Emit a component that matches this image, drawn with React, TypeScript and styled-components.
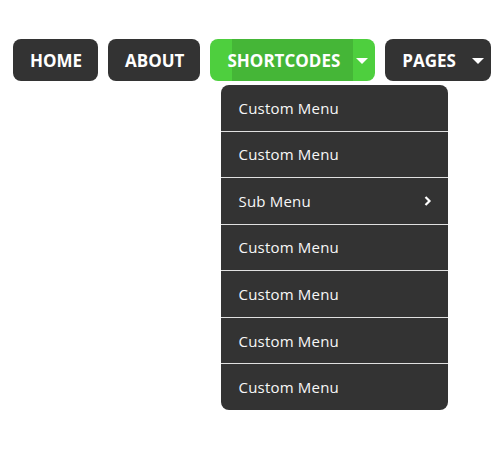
import React from "react";
import styled, { createGlobalStyle } from "styled-components";

const Global = createGlobalStyle`
  html, body { margin: 0; padding: 0; background: #fff; }
  body { font-family: "Open Sans", "Liberation Sans", sans-serif; }
`;

const Nav = styled.nav`
  display: flex;
  align-items: flex-start;
  gap: 10px;
  min-height: 472px;
  box-sizing: border-box;
  padding: 39px 0 0 13px;
`;

const NavItem = styled.div<{ $active?: boolean; $hasMenu?: boolean }>`
  position: relative;
  display: flex;
  align-items: center;
  height: 42px;
  padding: 0 ${(p) => (p.$hasMenu ? "7px" : "16px")} 0 17px;
  border-radius: 8px;
  color: #fff;
  font-weight: 700;
  font-size: 17px;
  background: ${(p) =>
    p.$active
      ? "linear-gradient(to right, #4ecf3e 22px, #45b637 22px, #45b637 143px, #4ecf3e 143px)"
      : "#333333"};
  cursor: pointer;
`;

const Label = styled.span`
  line-height: 1;
`;

const Caret = styled.span`
  display: inline-block;
  margin: 1px 0 0 16px;
  width: 0;
  height: 0;
  border-left: 6px solid transparent;
  border-right: 6px solid transparent;
  border-top: 6px solid #fff;
`;

const Dropdown = styled.ul`
  position: absolute;
  z-index: 10;
  left: 11px;
  top: 46px;
  width: 227px;
  margin: 0;
  padding: 0;
  list-style: none;
  background: #333333;
  border-radius: 8px;
  overflow: hidden;
`;

const MenuItem = styled.li<{ $first?: boolean }>`
  display: flex;
  align-items: center;
  justify-content: space-between;
  box-sizing: border-box;
  height: ${(p) => (p.$first ? "45.5px" : "46.6px")};
  padding: 0 16px 0 17px;
  border-top: ${(p) => (p.$first ? "none" : "1px solid #e0e0e0")};
  color: #f7f7f7;
  font-size: 15px;
  font-weight: 500;
  letter-spacing: 0.2px;
`;

const Chevron = () => (
  <svg width="8" height="10" viewBox="0 0 8 10" aria-hidden="true">
    <path d="M1.5 1 L5.5 5 L1.5 9" fill="none" stroke="#fff" strokeWidth="2.2" />
  </svg>
);

const items = ["Custom Menu", "Custom Menu", "Sub Menu", "Custom Menu", "Custom Menu", "Custom Menu", "Custom Menu"];

export default function App() {
  return (
    <>
      <Global />
      <Nav>
        <NavItem>
          <Label>HOME</Label>
        </NavItem>
        <NavItem>
          <Label>ABOUT</Label>
        </NavItem>
        <NavItem $active $hasMenu>
          <Label>SHORTCODES</Label>
          <Caret />
          <Dropdown>
            {items.map((t, i) => (
              <MenuItem key={i} $first={i === 0}>
                <span>{t}</span>
                {t === "Sub Menu" && <Chevron />}
              </MenuItem>
            ))}
          </Dropdown>
        </NavItem>
        <NavItem $hasMenu>
          <Label>PAGES</Label>
          <Caret />
        </NavItem>
      </Nav>
    </>
  );
}
